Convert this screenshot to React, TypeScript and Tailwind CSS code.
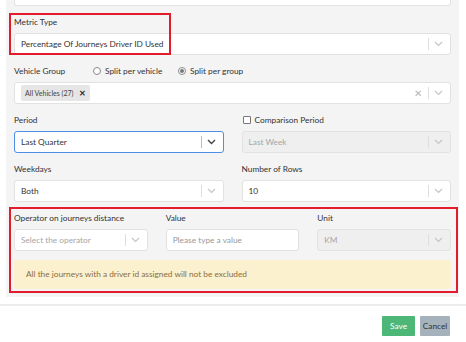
import { ReactNode } from "react";

const Chevron = ({ dark = false }: { dark?: boolean }) => (
  <svg width="9" height="6" viewBox="0 0 9 6" className="shrink-0">
    <path
      d="M1 1l3.5 3.5L8 1"
      fill="none"
      stroke={dark ? "#444" : "#c4c4c4"}
      strokeWidth={dark ? 1.4 : 1.1}
    />
  </svg>
);

const Select = ({
  value,
  placeholder = false,
  disabled = false,
  focused = false,
  children,
  clearable = false,
}: {
  value?: string;
  placeholder?: boolean;
  disabled?: boolean;
  focused?: boolean;
  children?: ReactNode;
  clearable?: boolean;
}) => (
  <div
    className={`flex h-[22px] items-center rounded-[3px] border pl-[6px] pr-[7px] ${
      focused ? "border-[#4d8ee8]" : "border-[#e2e2e2]"
    } ${disabled ? "bg-[#efefef]" : "bg-white"}`}
  >
    <div className="flex min-w-0 flex-1 items-center">
      {children ?? (
        <span className={placeholder || disabled ? "text-[#a6a6a6]" : "text-[#333]"}>{value}</span>
      )}
    </div>
    {clearable && <span className="mr-[6px] text-[10px] leading-none text-[#b5b5b5]">✕</span>}
    <span className={`mr-[5px] h-[12px] w-px ${focused ? "bg-[#bbb]" : "bg-[#dedede]"}`} />
    <Chevron dark={focused} />
  </div>
);

const Label = ({ children }: { children: ReactNode }) => (
  <div className="mb-[3px] h-[16px] leading-[16px] text-[#333]">{children}</div>
);

export default function App() {
  return (
    <div
      className="relative h-[342px] w-[466px] overflow-hidden bg-white text-[8.3px]"
      style={{ fontFamily: "Lato, 'Noto Sans', sans-serif" }}
    >
      <div className="ml-[6px] mr-[7px] h-[297px] bg-[#f4f4f4] px-[8px]">
        <div className="h-[6px] rounded-b-[3px] border-x border-b border-[#e2e2e2] bg-white" />

        <div className="mt-[8px]">
          <Label>Metric Type</Label>
          <Select value="Percentage Of Journeys Driver ID Used" />
        </div>

        <div className="mt-[8px]">
          <div className="mb-[3px] flex h-[16px] items-center text-[#333]">
            <span className="w-[79px]">Vehicle Group</span>
            <span className="mr-[4px] h-[8px] w-[8px] rounded-full border border-[#888] bg-white" />
            <span className="w-[73px]">Split per vehicle</span>
            <span className="mr-[4px] flex h-[8px] w-[8px] items-center justify-center rounded-full border border-[#888] bg-white">
              <span className="h-[4px] w-[4px] rounded-full bg-[#777]" />
            </span>
            <span>Split per group</span>
          </div>
          <Select clearable>
            <span className="flex h-[16px] items-center rounded-[2px] bg-[#e6e6e6] px-[4px] text-[7px] text-[#444]">
              All Vehicles (27)
              <span className="ml-[6px] text-[8px] font-bold text-[#333]">✕</span>
            </span>
          </Select>
        </div>

        <div className="mt-[8px] grid grid-cols-2 gap-x-[18px] gap-y-[8px]">
          <div>
            <Label>Period</Label>
            <Select value="Last Quarter" focused />
          </div>
          <div>
            <div className="mb-[3px] flex h-[16px] items-center text-[#333]">
              <span className="mr-[4px] ml-[1px] h-[8px] w-[8px] rounded-[1px] border border-[#777] bg-white" />
              Comparison Period
            </div>
            <Select value="Last Week" disabled />
          </div>
          <div>
            <Label>Weekdays</Label>
            <Select value="Both" />
          </div>
          <div>
            <Label>Number of Rows</Label>
            <Select value="10" />
          </div>
        </div>

        <div className="mt-[8px] grid grid-cols-3 gap-x-[18px]">
          <div>
            <Label>Operator on journeys distance</Label>
            <Select value="Select the operator" placeholder />
          </div>
          <div>
            <Label>Value</Label>
            <div className="flex h-[22px] items-center rounded-[3px] border border-[#e2e2e2] bg-white pl-[6px] text-[#999]">
              Please type a value
            </div>
          </div>
          <div>
            <Label>Unit</Label>
            <Select value="KM" disabled />
          </div>
        </div>

        <div className="mt-[9px] flex h-[29px] items-center rounded-[2px] bg-[#fcf1cf] pl-[12px] text-[#8a6d3b]">
          All the journeys with a driver id assigned will not be excluded
        </div>
      </div>

      <div className="mt-[7px] h-[2px] bg-[#eceeee]" />

      <div className="mt-[10px] flex justify-end gap-[5px] pr-[16px]">
        <button className="h-[20px] w-[33px] rounded-[1px] bg-[#4cb776] text-[8.3px] text-white">Save</button>
        <button className="h-[20px] w-[30px] rounded-[1px] bg-[#a5b2bc] text-[8.3px] text-[#333]">Cancel</button>
      </div>

      <div className="absolute left-[9px] top-[13px] h-[42px] w-[162px] border-2 border-[#e41b2a]" />
      <div className="absolute left-[9px] top-[207px] h-[86px] w-[449px] border-2 border-[#e41b2a]" />
    </div>
  );
}
